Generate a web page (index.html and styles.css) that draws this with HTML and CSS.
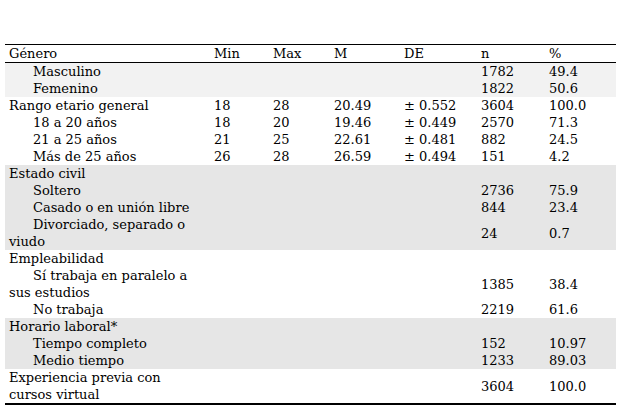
FILE: index.html
```html
<!DOCTYPE html>
<html lang="es">
<head>
<meta charset="utf-8">
<title>Tabla</title>
<link rel="stylesheet" href="styles.css">
</head>
<body>
<table class="data">
  <colgroup>
    <col class="c-label"><col class="c-min"><col class="c-max"><col class="c-m"><col class="c-de"><col class="c-n"><col class="c-pct">
  </colgroup>
  <thead>
    <tr><th>Género</th><th>Min</th><th>Max</th><th>M</th><th>DE</th><th>n</th><th>%</th></tr>
  </thead>
  <tbody>
    <tr class="light"><td class="ind">Masculino</td><td></td><td></td><td></td><td></td><td>1782</td><td>49.4</td></tr>
    <tr class="light"><td class="ind">Femenino</td><td></td><td></td><td></td><td></td><td>1822</td><td>50.6</td></tr>
    <tr><td>Rango etario general</td><td>18</td><td>28</td><td>20.49</td><td>± 0.552</td><td>3604</td><td>100.0</td></tr>
    <tr><td class="ind">18 a 20 años</td><td>18</td><td>20</td><td>19.46</td><td>± 0.449</td><td>2570</td><td>71.3</td></tr>
    <tr><td class="ind">21 a 25 años</td><td>21</td><td>25</td><td>22.61</td><td>± 0.481</td><td>882</td><td>24.5</td></tr>
    <tr><td class="ind">Más de 25 años</td><td>26</td><td>28</td><td>26.59</td><td>± 0.494</td><td>151</td><td>4.2</td></tr>
    <tr class="grey"><td>Estado civil</td><td></td><td></td><td></td><td></td><td></td><td></td></tr>
    <tr class="grey"><td class="ind">Soltero</td><td></td><td></td><td></td><td></td><td>2736</td><td>75.9</td></tr>
    <tr class="grey"><td class="ind">Casado o en unión libre</td><td></td><td></td><td></td><td></td><td>844</td><td>23.4</td></tr>
    <tr class="grey"><td class="ind">Divorciado, separado o viudo</td><td></td><td></td><td></td><td></td><td>24</td><td>0.7</td></tr>
    <tr><td>Empleabilidad</td><td></td><td></td><td></td><td></td><td></td><td></td></tr>
    <tr><td class="ind">Sí trabaja en paralelo a sus estudios</td><td></td><td></td><td></td><td></td><td>1385</td><td>38.4</td></tr>
    <tr><td class="ind">No trabaja</td><td></td><td></td><td></td><td></td><td>2219</td><td>61.6</td></tr>
    <tr class="grey"><td>Horario laboral*</td><td></td><td></td><td></td><td></td><td></td><td></td></tr>
    <tr class="grey"><td class="ind">Tiempo completo</td><td></td><td></td><td></td><td></td><td>152</td><td>10.97</td></tr>
    <tr class="grey"><td class="ind">Medio tiempo</td><td></td><td></td><td></td><td></td><td>1233</td><td>89.03</td></tr>
    <tr class="last"><td>Experiencia previa con cursos virtual</td><td></td><td></td><td></td><td></td><td>3604</td><td>100.0</td></tr>
  </tbody>
</table>
</body>
</html>
```
FILE: styles.css
```css
html, body {
  margin: 0;
  padding: 0;
  background: #ffffff;
}
body {
  padding: 44px 5px 0 5px;
  font-family: "DejaVu Serif", serif;
  font-size: 13px;
  color: #000;
}
.data {
  border-collapse: collapse;
  width: 611px;
  table-layout: fixed;
}
.c-label { width: 205px; }
.c-min { width: 59px; }
.c-max { width: 61px; }
.c-m { width: 70px; }
.c-de { width: 77px; }
.c-n { width: 68px; }
.c-pct { width: 71px; }
.data th,
.data td {
  padding: 0 3px 0 4px;
  line-height: 17px;
  text-align: left;
  vertical-align: middle;
  font-weight: normal;
}
.data thead tr {
  border-top: 1px solid #000;
  border-bottom: 1px solid #000;
}
.data td.ind {
  text-indent: 24px;
}
.data tr.light {
  background: #f2f2f2;
}
.data tr.grey {
  background: #e6e6e6;
}
.data tr.last {
  border-bottom: 2px solid #000;
}
```
